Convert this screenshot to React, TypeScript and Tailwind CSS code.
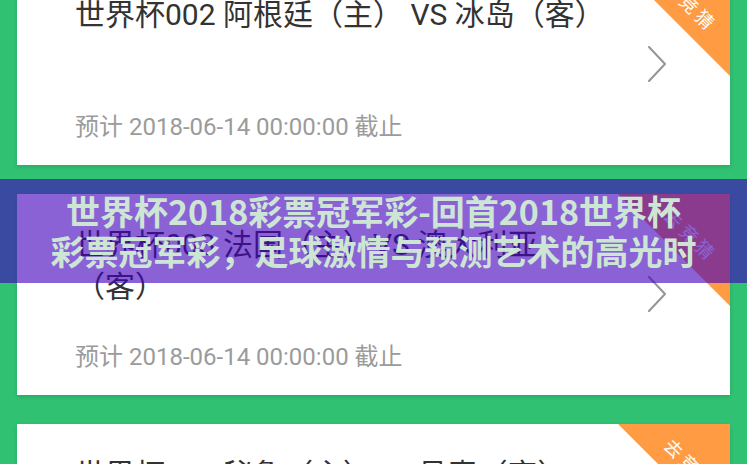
type Match = {
  title: string;
  deadline: string;
};

const matches: Match[] = [
  { title: "世界杯002 阿根廷（主） VS 冰岛（客）", deadline: "预计 2018-06-14 00:00:00 截止" },
  { title: "世界杯003 法国（主）VS 澳大利亚（客）", deadline: "预计 2018-06-14 00:00:00 截止" },
  { title: "世界杯004 秘鲁（主）VS 丹麦（客）", deadline: "预计 2018-06-14 00:00:00 截止" },
];

const font = "font-['Roboto','Noto_Sans_CJK_SC',sans-serif]";

function Ribbon() {
  return (
    <div className="absolute right-0 top-0 h-[112px] w-[112px] overflow-hidden">
      <div className="absolute inset-0 bg-[#fe9b43] [clip-path:polygon(0_0,100%_0,100%_100%)]" />
      <span className="absolute left-[72px] top-[42px] -translate-x-1/2 -translate-y-1/2 rotate-45 whitespace-nowrap text-[18px] leading-none tracking-[4px] text-white">
        去竞猜
      </span>
    </div>
  );
}

function Chevron() {
  return (
    <svg width="20" height="36" viewBox="0 0 20 36" fill="none" className="shrink-0">
      <polyline points="2,1 18,18 2,35" stroke="#959595" strokeWidth="2" strokeLinecap="round" strokeLinejoin="round" />
    </svg>
  );
}

function MatchCard({ match }: { match: Match }) {
  return (
    <div className="relative flex h-[201px] shrink-0 items-center bg-white shadow-[0_2px_4px_rgba(0,0,0,0.12)]">
      <Ribbon />
      <div className="flex h-full flex-1 flex-col justify-between pb-[23px] pl-[58px] pt-[30px]">
        <h3 className="w-[520px] text-[30px] leading-[42px] text-[#333333]">{match.title}</h3>
        <p className="text-[24px] leading-[30px] text-[#9b9b9b]">{match.deadline}</p>
      </div>
      <div className="mt-[-2px] pr-[63px]">
        <Chevron />
      </div>
    </div>
  );
}

export default function App() {
  return (
    <main className={`relative h-[464px] w-[747px] overflow-hidden bg-[#30c173] ${font}`}>
      <div className="-mt-[36px] flex flex-col gap-[29px] px-[17px]">
        {matches.map((m) => (
          <MatchCard key={m.title} match={m} />
        ))}
      </div>

      {/* 标题遮罩 */}
      <div className="absolute left-0 right-0 top-[179px] flex h-[104px] items-center justify-center bg-[rgba(65,0,189,0.615)]">
        <h1 className="flex flex-col items-center whitespace-nowrap font-['Noto_Sans_CJK_SC',sans-serif] text-[34px] font-bold leading-[40px] text-[#cde6d4]">
          <span>世界杯2018彩票冠军彩-回首2018世界杯</span>
          <span>彩票冠军彩，足球激情与预测艺术的高光时</span>
        </h1>
      </div>
    </main>
  );
}
